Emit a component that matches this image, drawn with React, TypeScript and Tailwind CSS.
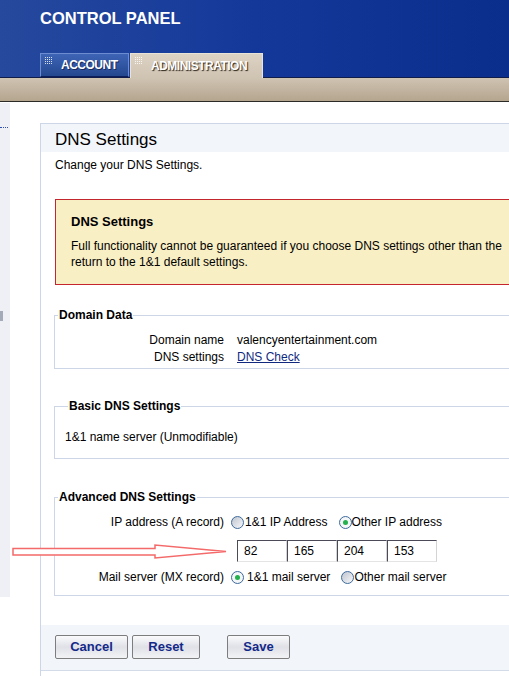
import React from "react";

function Dots() {
  return (
    <span className="grid grid-cols-4 gap-[1px]">
      {Array.from({ length: 16 }).map((_, i) => (
        <span key={i} className="h-[1px] w-[1px] bg-white/80" />
      ))}
    </span>
  );
}

function Header() {
  return (
    <div className="flex h-[78px] flex-col border-b border-[#101c4a] bg-linear-to-r from-[#26499d] via-[#13389a] to-[#0a2e8b]">
      <div className="pl-[40px] pt-[8px] text-[16.5px] font-bold leading-[20px] text-white">
        CONTROL PANEL
      </div>
      <div className="mt-auto flex h-[24px] items-end gap-[1px] pl-[40px]">
        <div className="flex h-[24px] w-[89px] shrink-0 items-start border border-[#6c8bd0] border-b-[#0c1f5c] bg-linear-to-b from-[#3e64b6] to-[#24488f]">
          <span className="ml-[4px] mt-[3px]">
            <Dots />
          </span>
          <span className="ml-[9px] self-center text-[12px] font-bold tracking-[-0.5px] text-white [text-shadow:1px_1px_0_#1a2a5a]">
            ACCOUNT
          </span>
        </div>
        <div className="relative top-[1px] z-10 flex h-[25px] w-[133px] shrink-0 items-start border-t border-l border-r border-[#e9e2d6] bg-linear-to-b from-[#ddd3c4] to-[#cfc3b2]">
          <span className="ml-[4px] mt-[3px]">
            <Dots />
          </span>
          <span className="ml-[9px] mt-[3px] text-[12px] font-bold tracking-[-0.5px] text-white [text-shadow:1px_1px_1px_#2a2418]">
            ADMINISTRATION
          </span>
        </div>
      </div>
    </div>
  );
}

function Sidebar() {
  return (
    <div className="mt-[1px] flex h-[494px] w-[10px] shrink-0 flex-col bg-[#eef0f6]">
      <div className="mt-[24px] w-[8px] border-t border-dotted border-[#3050b0]" />
      <div className="mt-[183px] h-[10px] w-[3px] bg-[#a3aab8]" />
    </div>
  );
}

function Box({
  title,
  className,
  children,
}: {
  title: string;
  className: string;
  children: React.ReactNode;
}) {
  return (
    <fieldset className={"ml-[13px] min-w-0 border border-r-0 border-[#cdd6e6] " + className}>
      <legend className="ml-[3px] px-[1px] text-[12px] font-bold leading-[14px]">{title}</legend>
      {children}
    </fieldset>
  );
}

function Radio({ checked }: { checked?: boolean }) {
  return (
    <span
      className={
        "flex h-[13px] w-[13px] shrink-0 items-center justify-center rounded-full border border-[#3d6a9c] " +
        (checked ? "bg-[#f4f6f8]" : "bg-linear-to-br from-[#bfc5cf] to-[#f7f8fa]")
      }
    >
      {checked && <span className="h-[5px] w-[5px] rounded-full bg-[#22b14c]" />}
    </span>
  );
}

function Btn({ label, w }: { label: string; w: string }) {
  return (
    <button
      className={
        "h-[24px] rounded-[2px] border border-[#7d7d7d] bg-linear-to-b from-[#fbfbfc] via-[#dfe1e7] to-[#f2f3f5] text-[13px] font-bold text-[#13298a] " +
        w
      }
    >
      {label}
    </button>
  );
}

const ip = ["82", "165", "204", "153"];

function Panel() {
  return (
    <div className="ml-[30px] mt-[21px] h-[600px] min-w-0 flex-1 border-l border-t border-[#cdd6e6]">
      <div className="flex h-[28px] items-center bg-[#f2f5fa] pl-[14px] pt-[3px] text-[17px] leading-[20px]">
        DNS Settings
      </div>
      <p className="mt-[6px] pl-[14px] leading-[14px]">Change your DNS Settings.</p>

      <div className="ml-[14px] mt-[27px] h-[86px] overflow-hidden border border-r-0 border-[#c3272d] bg-[#f8efc5] pl-[15px] pt-[14px]">
        <div className="text-[13px] font-bold leading-[16px]">DNS Settings</div>
        <div className="mt-[8px] whitespace-nowrap leading-[16px]">
          Full functionality cannot be guaranteed if you choose DNS settings other than the
          <br />
          return to the 1&amp;1 default settings.
        </div>
      </div>

      <Box title="Domain Data" className="mt-[23px] pb-[2px] pt-[10px]">
        <div className="grid grid-cols-[169px_1fr] gap-x-[13px] leading-[17px]">
          <span className="text-right">Domain name</span>
          <span>valencyentertainment.com</span>
          <span className="text-right">DNS settings</span>
          <a href="#" className="text-[#10297f] underline">
            DNS Check
          </a>
        </div>
      </Box>

      <Box title="Basic DNS Settings" className="mt-[30px] pb-[13px] pl-[10px] pt-[16px]">
        <div className="leading-[16px]">1&amp;1 name server (Unmodifiable)</div>
      </Box>

      <Box title="Advanced DNS Settings" className="mt-[31px] pb-[9px] pt-[9px]">
        <div className="flex h-[18px] items-center">
          <span className="w-[169px] text-right">IP address (A record)</span>
          <span className="ml-[7px] flex items-center">
            <Radio />
            <span className="ml-[1px]">1&amp;1 IP Address</span>
          </span>
          <span className="ml-[11px] flex items-center">
            <Radio checked />
            <span>Other IP address</span>
          </span>
        </div>
        <div className="ml-[182px] mt-[9px] flex">
          {ip.map((v) => (
            <span
              key={v}
              className="flex h-[22px] w-[50px] items-center border border-t-[#4a4a58] border-l-[#4a4a58] border-r-[#d4d4d4] border-b-[#e4e4e4] bg-white pl-[6px]"
            >
              {v}
            </span>
          ))}
        </div>
        <div className="mt-[6px] flex h-[18px] items-center">
          <span className="w-[169px] text-right">Mail server (MX record)</span>
          <span className="ml-[7px] flex items-center">
            <Radio checked />
            <span className="ml-[3px]">1&amp;1 mail server</span>
          </span>
          <span className="ml-[11px] flex items-center">
            <Radio />
            <span>Other mail server</span>
          </span>
        </div>
      </Box>

      <div className="mt-[29px] flex h-[46px] items-start border-b border-[#d3dbe9] bg-[#f2f5fa] pl-[14px] pt-[10px]">
        <Btn label="Cancel" w="w-[73px]" />
        <span className="ml-[4px]">
          <Btn label="Reset" w="w-[68px]" />
        </span>
        <span className="ml-[27px]">
          <Btn label="Save" w="w-[63px]" />
        </span>
      </div>
    </div>
  );
}

function Arrow() {
  return (
    <svg className="absolute left-0 top-[540px]" width="240" height="24" viewBox="0 0 240 24">
      <polygon
        points="13,8.5 155,8.5 155,5 226,11.5 155,18 155,15 13,15"
        fill="white"
        stroke="#f46a6a"
        strokeWidth="1.5"
      />
    </svg>
  );
}

export default function App() {
  return (
    <div className="relative h-[676px] w-[509px] overflow-hidden bg-white font-['Liberation_Sans',Arial,sans-serif] text-[12px] text-black">
      <Header />
      <div className="h-[24px] border-b border-[#2b2a26] bg-linear-to-b from-[#cfc3b2] to-[#b4a58e]" />
      <div className="flex items-start">
        <Sidebar />
        <Panel />
      </div>
      <Arrow />
    </div>
  );
}
